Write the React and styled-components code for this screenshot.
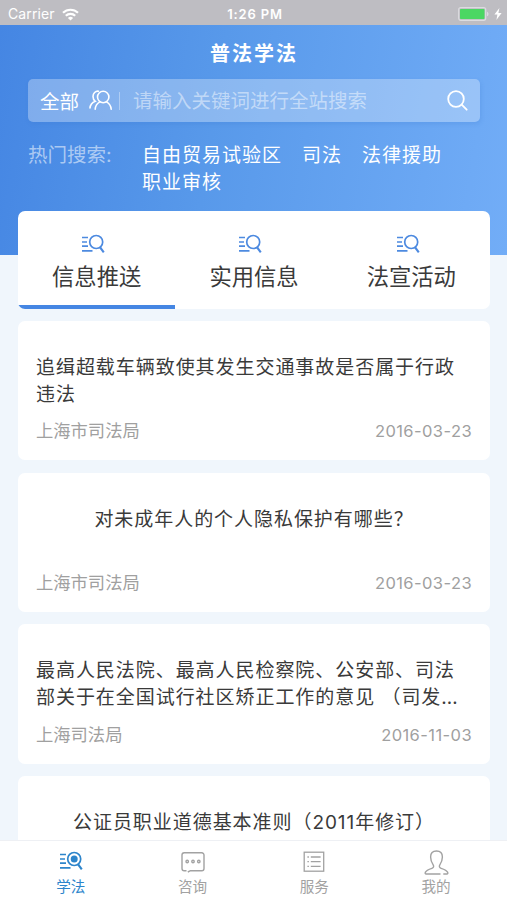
import React from 'react';
import styled, { createGlobalStyle } from 'styled-components';

const GlobalStyle = createGlobalStyle`
  * {
    box-sizing: border-box;
  }
  body {
    margin: 0;
    overflow: hidden;
    font-family: Inter, "Noto Sans CJK SC", sans-serif;
    color: #3a3a3a;
  }
`;

const Screen = styled.div`
  display: flex;
  flex-direction: column;
  width: 507px;
  height: 900px;
  overflow: hidden;
  background: #f0f6fc;
`;

const StatusBar = styled.div`
  display: flex;
  flex: none;
  align-items: center;
  justify-content: space-between;
  height: 25px;
  padding: 3px 5px 0 8px;
  background: #bebdc2;
  color: #fff;
  font-size: 14px;
  line-height: 20px;
`;

const StatusSide = styled.div`
  display: flex;
  flex: 1;
  align-items: center;
  justify-content: ${props => (props.$right ? 'flex-end' : 'flex-start')};
  gap: ${props => (props.$right ? '5px' : '7px')};
  letter-spacing: 0.1px;
`;

const Clock = styled.div`
  font-size: 13px;
  font-weight: 600;
  letter-spacing: 0.85px;
`;

const Header = styled.header`
  flex: none;
  height: 230px;
  padding: 12px 27px 0 28px;
  background: linear-gradient(99deg, #4586e3 0%, #5899ea 42%, #72adf7 100%);
  color: #fff;
`;

const PageTitle = styled.h1`
  margin: 0;
  font-size: 20px;
  font-weight: 700;
  line-height: 34px;
  letter-spacing: 2px;
  text-align: center;
`;

const SearchBar = styled.div`
  display: flex;
  align-items: center;
  height: 43px;
  margin-top: 8px;
  padding: 0 12px;
  border-radius: 5px;
  background: rgba(255, 255, 255, 0.3);
  box-shadow: 1px 2px 4px rgba(50, 110, 200, 0.18);
  font-size: 19.5px;
`;

const Scope = styled.div`
  display: flex;
  align-items: center;
  gap: 10px;
`;

const Placeholder = styled.div`
  flex: 1;
  margin-left: 6px;
  padding-left: 13px;
  border-left: 1px solid rgba(255, 255, 255, 0.35);
  color: rgba(255, 255, 255, 0.48);
  line-height: 18px;
`;

const HotSearch = styled.div`
  display: flex;
  margin-top: 20px;
  font-size: 19.5px;
  line-height: 27px;
`;

const HotLabel = styled.div`
  flex: none;
  width: 114px;
  color: rgba(255, 255, 255, 0.55);
`;

const HotTags = styled.div`
  display: flex;
  flex-wrap: wrap;
  column-gap: 20px;
  font-size: 19px;
  letter-spacing: 1px;
`;

const Tabs = styled.div`
  display: flex;
  flex: none;
  height: 98px;
  margin: -44px 17px 0 18px;
  overflow: hidden;
  border-radius: 7px;
  background: #fff;
`;

const Tab = styled.div`
  display: flex;
  flex: 1;
  flex-direction: column;
  align-items: center;
  padding-top: 23px;
  border-bottom: 4px solid ${props => (props.$active ? '#4586e3' : 'transparent')};
  font-size: 22.3px;
  line-height: 34px;
`;

const TabIcon = styled.div`
  display: flex;
  height: 26px;
  margin-left: -7px;
  color: #4d8ae0;
`;

const List = styled.div`
  flex: 1;
  min-height: 0;
  margin: 12px 17px 0 18px;
  overflow: hidden;
`;

const Card = styled.div`
  display: flex;
  flex-direction: column;
  height: 139.4px;
  margin-bottom: 12.3px;
  padding: 33px 18px 17px;
  border-radius: 7px;
  background: #fff;
`;

const CardTitle = styled.div`
  font-size: 19px;
  line-height: 27px;
  letter-spacing: 0.95px;
  text-align: ${props => (props.$center ? 'center' : 'left')};
`;

const CardMeta = styled.div`
  display: flex;
  justify-content: space-between;
  margin-top: auto;
  color: #a0a0a0;
  font-size: 17.3px;
  line-height: 24px;
`;

const CardDate = styled.span`
  font-size: 16.5px;
  letter-spacing: 0.42px;
`;

const BottomNav = styled.nav`
  display: flex;
  flex: none;
  height: 60px;
  padding: 0 10px;
  border-top: 1px solid #eef0f4;
  background: #fff;
`;

const NavItem = styled.div`
  display: flex;
  flex: 1;
  flex-direction: column;
  align-items: center;
  padding-top: 8px;
  color: ${props => (props.$active ? '#2d85cb' : '#a2a2a2')};
  font-size: 14.6px;
  line-height: 24px;
`;

const NavIcon = styled.div`
  display: flex;
  align-items: center;
  height: 26px;
  padding-bottom: ${props => (props.$raised ? '3px' : '0')};
`;

const WifiIcon = () => (
  <svg width="17" height="13" viewBox="0 0 17 13" fill="none" stroke="#fff" strokeWidth="2.2">
    <path d="M1 4.8a10.8 10.8 0 0 1 15 0" />
    <path d="M3.8 7.8a6.7 6.7 0 0 1 9.4 0" />
    <path d="M8.5 12.5L5.9 9.9a3.8 3.8 0 0 1 5.2 0z" fill="#fff" stroke="none" />
  </svg>
);

const BatteryIcon = () => (
  <svg width="31" height="14" viewBox="0 0 31 14">
    <rect x="0.7" y="0.7" width="27" height="12.6" rx="2" fill="none" stroke="#dcdce0" strokeWidth="1.2" />
    <rect x="2" y="2" width="24.5" height="10" rx="0.8" fill="#4bd763" />
    <path d="M29 4.7c2 .6 2 4 0 4.6z" fill="#dcdce0" />
  </svg>
);

const BoltIcon = () => (
  <svg width="8" height="12" viewBox="0 0 8 12">
    <path d="M5.4 0L0.4 6.6h3L2.4 12l5.2-7H4.4z" fill="#fff" />
  </svg>
);

const PeopleIcon = () => (
  <svg width="24" height="21" viewBox="0 0 24 21" fill="none" stroke="#fff" strokeWidth="1.6" strokeLinecap="round">
    <circle cx="14.2" cy="7" r="5.7" />
    <path d="M6.2 19.3c.2-3.500 2-6 4.700-7.400M17.500 11.900c2.600 1.500 4.500 4 4.700 7.400" />
    <path d="M9.5 1.200C6.400.8 4 3.400 4 6.500c0 2 .9 3.700 2.300 4.800C3.300 12.600 1.200 15 1 18" />
  </svg>
);

const SearchIcon = () => (
  <svg width="21" height="21" viewBox="0 0 21 21" fill="none" stroke="#fff" strokeWidth="1.8" strokeLinecap="round">
    <circle cx="9" cy="9" r="7.8" />
    <path d="M14.7 14.7l5 5" />
  </svg>
);

const ListSearchIcon = ({ active }) => (
  <svg width="24" height="20" viewBox="0 0 24 20" fill="none" stroke="currentColor" strokeWidth="1.7">
    <path d="M1 3.5h6M1 8h5M1 12.2h6M1 16.8h10.5" />
    <circle cx="15.2" cy="8" r="6.5" />
    <path d="M18.8 13l4 5.3" strokeWidth="2.1" />
    {active && <circle cx="15.2" cy="8" r="3.5" fill="currentColor" stroke="none" />}
  </svg>
);

const ChatIcon = () => (
  <svg width="24" height="22" viewBox="0 0 24 22" fill="none" stroke="currentColor" strokeWidth="1.4">
    <path d="M5.5 19.7H3.200A2.200 2.200 0 0 1 1 17.500V4a2.200 2.200 0 0 1 2.200-2.200h17.600A2.200 2.200 0 0 1 23 4v13.500a2.200 2.200 0 0 1-2.200 2.200H9.500L6.800 21" />
    <circle cx="6.2" cy="10.5" r="1.2" />
    <circle cx="12" cy="10.5" r="1.2" />
    <circle cx="17.8" cy="10.5" r="1.2" />
  </svg>
);

const ServiceIcon = () => (
  <svg width="22" height="22" viewBox="0 0 22 22" fill="none" stroke="currentColor" strokeWidth="1.3">
    <rect x="1.2" y="1.2" width="19.5" height="19" />
    <path d="M4.4 6h1.5M4.4 10.7h1.5M4.4 15.4h1.5M7.8 6h9.8M7.8 10.7h9.8M7.8 15.4h9.8" />
  </svg>
);

const UserIcon = () => (
  <svg width="25" height="25" viewBox="0 0 25 25" fill="none" stroke="currentColor" strokeWidth="1.4" strokeLinecap="round">
    <path d="M16 24H2.200c-1 0-1.300-.8-.9-1.600 1-2.200 3.800-3.200 6.600-4.100 1.600-.5 2.200-1.900 1.400-3.200C7.700 12.800 6.600 10 6.600 7c0-3.700 2.300-6 5.900-6s5.900 2.300 5.900 6c0 3-1.100 5.800-2.700 8.100-.8 1.300-.2 2.700 1.400 3.200 2.800.9 5.600 1.900 6.600 4.100.4.800.1 1.600-.9 1.600h-3" />
  </svg>
);

const tags = ['自由贸易试验区', '司法', '法律援助', '职业审核'];

const tabs = ['信息推送', '实用信息', '法宣活动'];

const articles = [
  { title: '追缉超载车辆致使其发生交通事故是否属于行政违法', source: '上海市司法局', date: '2016-03-23' },
  { title: '对未成年人的个人隐私保护有哪些？', source: '上海市司法局', date: '2016-03-23', center: true },
  {
    title: '最高人民法院、最高人民检察院、公安部、司法部关于在全国试行社区矫正工作的意见 （司发…',
    source: '上海司法局',
    date: '2016-11-03',
  },
  { title: '公证员职业道德基本准则（2011年修订）', center: true },
];

const App = () => (
  <Screen>
    <GlobalStyle />
    <StatusBar>
      <StatusSide>Carrier <WifiIcon /></StatusSide>
      <Clock>1:26 PM</Clock>
      <StatusSide $right><BatteryIcon /><BoltIcon /></StatusSide>
    </StatusBar>
    <Header>
      <PageTitle>普法学法</PageTitle>
      <SearchBar>
        <Scope>全部 <PeopleIcon /></Scope>
        <Placeholder>请输入关键词进行全站搜索</Placeholder>
        <SearchIcon />
      </SearchBar>
      <HotSearch>
        <HotLabel>热门搜索:</HotLabel>
        <HotTags>
          {tags.map(tag => <span key={tag}>{tag}</span>)}
        </HotTags>
      </HotSearch>
    </Header>
    <Tabs>
      {tabs.map((tab, i) => (
        <Tab key={tab} $active={i === 0}>
          <TabIcon><ListSearchIcon /></TabIcon>
          {tab}
        </Tab>
      ))}
    </Tabs>
    <List>
      {articles.map(article => (
        <Card key={article.title}>
          <CardTitle $center={article.center}>{article.title}</CardTitle>
          {article.source && (
            <CardMeta>
              <span>{article.source}</span>
              <CardDate>{article.date}</CardDate>
            </CardMeta>
          )}
        </Card>
      ))}
    </List>
    <BottomNav>
      <NavItem $active><NavIcon $raised><ListSearchIcon active /></NavIcon>学法</NavItem>
      <NavItem><NavIcon><ChatIcon /></NavIcon>咨询</NavItem>
      <NavItem><NavIcon><ServiceIcon /></NavIcon>服务</NavItem>
      <NavItem><NavIcon><UserIcon /></NavIcon>我的</NavItem>
    </BottomNav>
  </Screen>
);

export default App;
